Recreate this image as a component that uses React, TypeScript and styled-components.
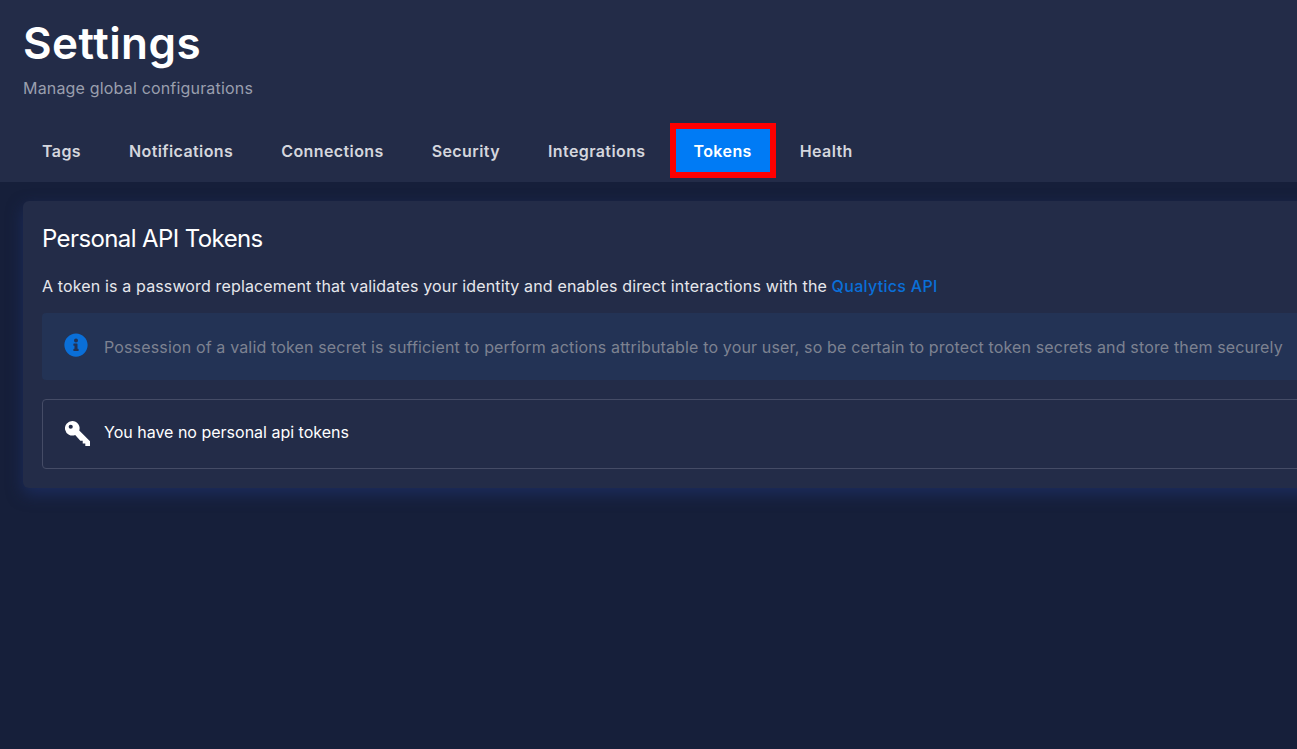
import { createGlobalStyle, styled } from "styled-components";
import { FaInfoCircle } from "react-icons/fa";

const GlobalStyle = createGlobalStyle`
  html, body {
    margin: 0;
    height: 100%;
    overflow: hidden;
    background: #161f3a;
  }
  body {
    font-family: Inter, "Noto Sans", sans-serif;
  }
`;

const Page = styled.div`
  width: 1297px;
  height: 749px;
  overflow: hidden;
  background: #161f3a;
`;

const Header = styled.header`
  height: 182px;
  box-sizing: border-box;
  padding: 19px 23px 0;
  background: #232c48;
`;

const Title = styled.h1`
  margin: 0;
  font-size: 44px;
  line-height: 48px;
  font-weight: 600;
  letter-spacing: 0.45px;
  color: #fff;
`;

const Subtitle = styled.p`
  margin: 1px 0 0;
  font-size: 16px;
  line-height: 40px;
  letter-spacing: 0.18px;
  color: #9a9fae;
`;

const Tabs = styled.nav`
  display: flex;
  margin: 15px 0 0 -5px;
`;

const Tab = styled.div<{ $active?: boolean }>`
  display: flex;
  align-items: center;
  height: 55px;
  box-sizing: border-box;
  padding: 0 18px;
  border: 6px solid ${(p) => (p.$active ? "#ff0000" : "transparent")};
  font-size: 16px;
  font-weight: 600;
  letter-spacing: 0.4px;
  color: ${(p) => (p.$active ? "#fff" : "#d4d6dd")};
  background: ${(p) => (p.$active ? "#007bf5" : "transparent")};
  background-clip: padding-box;
`;

const Main = styled.main`
  padding: 19px 0 0 23px;
`;

const Card = styled.section`
  width: 1340px;
  height: 287px;
  box-sizing: border-box;
  padding: 20px 19px;
  border-radius: 6px;
  background: #232c48;
  box-shadow: 0 6px 16px rgba(30, 50, 110, 0.65);
`;

const CardTitle = styled.h2`
  margin: 0;
  font-size: 24px;
  line-height: 36px;
  font-weight: 400;
  letter-spacing: -0.6px;
  color: #fff;
`;

const Intro = styled.p`
  margin: 17px 0 0;
  font-size: 16px;
  line-height: 24px;
  letter-spacing: 0.14px;
  color: #e6e7ec;
`;

const DocsLink = styled.a`
  color: #0a6fd8;
  font-weight: 500;
  letter-spacing: 0.3px;
  text-decoration: none;
`;

const Alert = styled.div`
  display: flex;
  align-items: center;
  gap: 16px;
  height: 67px;
  margin-top: 15px;
  padding: 0 22px;
  border-radius: 4px;
  background: #233355;
  font-size: 16px;
  letter-spacing: 0.15px;
  color: #7d8291;
`;

const InfoIcon = styled(FaInfoCircle)`
  flex: none;
  width: 24px;
  height: 24px;
  margin-top: -4px;
  color: #0a6fd8;
`;

const EmptyBox = styled.div`
  display: flex;
  align-items: center;
  gap: 14px;
  height: 70px;
  box-sizing: border-box;
  margin-top: 19px;
  padding: 0 21px 5px;
  border: 1px solid #454c66;
  border-radius: 4px;
  font-size: 16px;
  color: #fff;
`;

const KeySvg = styled.svg`
  flex: none;
  width: 25px;
  height: 25px;
  margin: 3px 0 0 1px;
  color: #fff;
`;

// key lying on the diagonal, round head top left
const KeyIcon = () => (
  <KeySvg viewBox="0 0 24 24" fill="currentColor">
    <path
      fillRule="evenodd"
      d="M7 0a7 7 0 0 1 6.7 9.1L24 19.4V24h-4.5v-2.5H17V19h-2.3l-4.9-5.6A7 7 0 1 1 7 0ZM5.5 3.5a2 2 0 1 0 0 4 2 2 0 0 0 0-4Z"
    />
  </KeySvg>
);

const tabs = ["Tags", "Notifications", "Connections", "Security", "Integrations", "Tokens", "Health"];

export default function App() {
  return (
    <Page>
      <GlobalStyle />
      <Header>
        <Title>Settings</Title>
        <Subtitle>Manage global configurations</Subtitle>
        <Tabs>
          {tabs.map((tab) => (
            <Tab key={tab} $active={tab === "Tokens"}>
              {tab}
            </Tab>
          ))}
        </Tabs>
      </Header>
      <Main>
        <Card>
          <CardTitle>Personal API Tokens</CardTitle>
          <Intro>
            A token is a password replacement that validates your identity and enables direct
            interactions with the <DocsLink>Qualytics API</DocsLink>
          </Intro>
          <Alert>
            <InfoIcon />
            Possession of a valid token secret is sufficient to perform actions attributable to
            your user, so be certain to protect token secrets and store them securely
          </Alert>
          <EmptyBox>
            <KeyIcon />
            You have no personal api tokens
          </EmptyBox>
        </Card>
      </Main>
    </Page>
  );
}
